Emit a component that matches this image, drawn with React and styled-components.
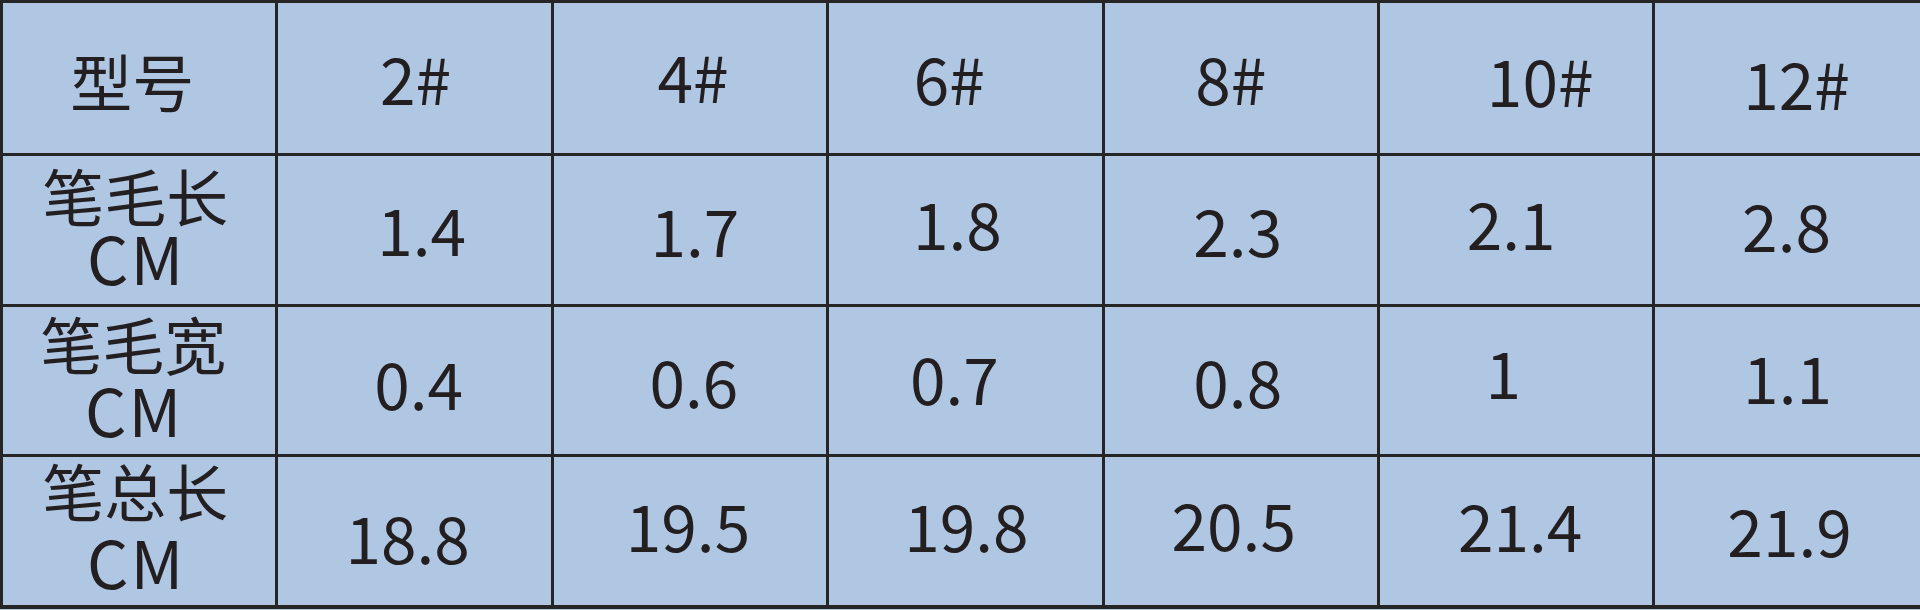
import React from "react";
import styled, { createGlobalStyle } from "styled-components";

const GlobalStyle = createGlobalStyle`
    html, body {
        margin: 0;
        padding: 0;
        background: #b0c7e4;
        overflow: hidden;
    }
`;

const Sheet = styled.div`
    width: 1920px;
    height: 610px;
    overflow: hidden;
    font-family: "Noto Sans CJK SC", "Noto Sans", sans-serif;
    color: #231f20;
`;

const Grid = styled.div`
    display: grid;
    grid-template-columns: repeat(7, 272.4px);
    grid-template-rows: 150px 148px 147px 148px;
    gap: 3px;
    padding: 3px 0 4px 3px;
    width: max-content;
    background: #262424;
`;

const Cell = styled.div`
    background: #b0c7e4;
    display: flex;
    align-items: center;
    justify-content: center;
    text-align: center;
`;

const Value = styled.span`
    font-size: 64px;
    line-height: 1;
    transform: translate(${(p) => p.$dx || 0}px, ${(p) => p.$dy || 0}px);
`;

const Label = styled.div`
    display: flex;
    flex-direction: column;
    align-items: center;
    font-size: 62px;
    line-height: ${(p) => p.$lh || 68}px;
    transform: translate(${(p) => p.$dx || 0}px, ${(p) => p.$dy || 0}px);
`;

const Unit = styled.span`
    font-size: 65px;
    letter-spacing: 2px;
    margin-left: 2px;
`;

const header = [
    { v: "2#", dx: 1, dy: -1 },
    { v: "4#", dx: 3, dy: -3 },
    { v: "6#", dx: -16, dy: -1 },
    { v: "8#", dx: -10, dy: -1 },
    { v: "10#", dx: 24, dy: 1 },
    { v: "12#", dx: 5, dy: 4 },
];

const rows = [
    {
        name: "笔毛长",
        lh: 62,
        dx: -4,
        dy: -4,
        cells: [
            { v: "1.4", dx: 7, dy: -2 },
            { v: "1.7", dx: 5, dy: -1 },
            { v: "1.8", dx: -8, dy: -8 },
            { v: "2.3", dx: -3, dy: -1 },
            { v: "2.1", dx: -5, dy: -8 },
            { v: "2.8", dx: -5, dy: -6 },
        ],
    },
    {
        name: "笔毛宽",
        lh: 66,
        dx: -6,
        dy: -5,
        cells: [
            { v: "0.4", dx: 4, dy: 1 },
            { v: "0.6", dx: 4, dy: -1 },
            { v: "0.7", dx: -11, dy: -4 },
            { v: "0.8", dx: -3, dy: -1 },
            { v: "1", dx: -13, dy: -10 },
            { v: "1.1", dx: -4, dy: -5 },
        ],
    },
    {
        name: "笔总长",
        lh: 71,
        dx: -4,
        dy: -5,
        cells: [
            { v: "18.8", dx: -7, dy: 5 },
            { v: "19.5", dx: -2, dy: -7 },
            { v: "19.8", dx: 1, dy: -7 },
            { v: "20.5", dx: -7, dy: -8 },
            { v: "21.4", dx: 4, dy: -7 },
            { v: "21.9", dx: -2, dy: -2 },
        ],
    },
];

const App = () => {
    return (
        <Sheet>
            <GlobalStyle />
            <Grid>
                <Cell>
                    <Label $dx={-7} $dy={2}>型号</Label>
                </Cell>
                {header.map((h) => (
                    <Cell key={h.v}>
                        <Value $dx={h.dx} $dy={h.dy}>{h.v}</Value>
                    </Cell>
                ))}

                {rows.map((row) => (
                    <React.Fragment key={row.name}>
                        <Cell>
                            <Label $lh={row.lh} $dx={row.dx} $dy={row.dy}>
                                <span>{row.name}</span>
                                <Unit>CM</Unit>
                            </Label>
                        </Cell>
                        {row.cells.map((c, i) => (
                            <Cell key={i}>
                                <Value $dx={c.dx} $dy={c.dy}>{c.v}</Value>
                            </Cell>
                        ))}
                    </React.Fragment>
                ))}
            </Grid>
        </Sheet>
    );
};

export default App;
